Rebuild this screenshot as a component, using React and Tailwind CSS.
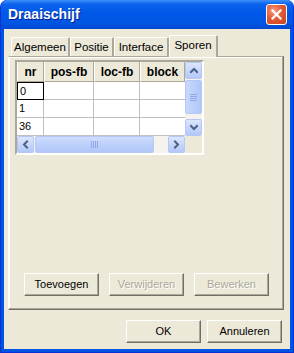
import React from "react";

const Chevron = ({ dir }) => {
  const paths = {
    up: "M2 6 L5 3 L8 6",
    down: "M2 3 L5 6 L8 3",
    left: "M6 1.5 L3 4.5 L6 7.5",
    right: "M3 1.5 L6 4.5 L3 7.5",
  };
  return (
    <svg width="9" height="9" viewBox="0 0 9 9" className="block">
      <path d={paths[dir]} fill="none" stroke="#4D6185" strokeWidth="2" strokeLinecap="square" />
    </svg>
  );
};

function ScrollButton({ dir }) {
  return (
    <div className="w-[17px] h-[17px] flex items-center justify-center rounded-[2px] border border-[#B5C8F5] bg-[linear-gradient(180deg,#DCE6FD_0%,#C3D4FB_60%,#B3C8F7_100%)]">
      <Chevron dir={dir} />
    </div>
  );
}

function XpButton({ children, disabled, className = "" }) {
  return (
    <button
      className={
        "h-[23px] w-[75px] bg-[#ECE9D8] border border-t-white border-l-white border-r-[#716F64] border-b-[#716F64] shadow-[inset_-1px_-1px_0_#ACA899] text-[11px] " +
        (disabled ? "text-[#ACA899] [text-shadow:1px_1px_0_#fff] " : "text-black ") +
        className
      }
    >
      {children}
    </button>
  );
}

function Tab({ label, active, className = "" }) {
  return (
    <div
      className={
        "relative flex items-center justify-center bg-[#ECE9D8] border-l border-t border-l-white border-t-white border-r-2 border-r-[#ACA899] rounded-t-[2px] text-[11.5px] " +
        (active ? "h-[22px] z-10 -mb-[1px] pb-[2px] " : "h-[19px] pt-[1px] ") +
        className
      }
    >
      {label}
    </div>
  );
}

const rows = ["0", "1", "36"];

export default function App() {
  return (
    <div className="w-[294px] h-[353px] flex flex-col overflow-hidden rounded-t-[7px] bg-[#0054E3] border-x border-b border-[#0831D9] font-['Liberation_Sans',Arial,sans-serif] text-[11px] text-black">
      {/* title bar */}
      <div className="h-[29px] shrink-0 flex items-center justify-between pl-[7px] pr-[6px] bg-[linear-gradient(180deg,#3E8FF9_0%,#0A62EC_15%,#0058E8_45%,#0055E3_80%,#0048D0_100%)]">
        <span className="text-white font-bold text-[14px] [text-shadow:1px_1px_0_#0A1E8C]">Draaischijf</span>
        <div className="w-[21px] h-[21px] rounded-[3px] border border-white flex items-center justify-center bg-[radial-gradient(circle_at_35%_30%,#F39E83_0%,#E35A35_45%,#C8441E_100%)]">
          <svg width="11" height="11" viewBox="0 0 11 11">
            <path d="M1.5 1.5 L9.5 9.5 M9.5 1.5 L1.5 9.5" stroke="white" strokeWidth="2.2" strokeLinecap="square" />
          </svg>
        </div>
      </div>

      {/* body */}
      <div className="flex-1 mx-[3px] mb-[3px] bg-[#ECE9D8] flex flex-col pt-[5px] pl-[4px] pr-[6px]">
        {/* tabs */}
        <div className="flex items-end h-[22px] pl-[3px]">
          <Tab label="Algemeen" className="w-[59px]" />
          <Tab label="Positie" className="w-[44px]" />
          <Tab label="Interface" className="w-[55px]" />
          <Tab label="Sporen" active className="w-[49px]" />
        </div>

        {/* tab panel */}
        <div className="h-[254px] flex flex-col border border-t-[#ACA899] border-l-white border-r-[#716F64] border-b-[#716F64] shadow-[inset_-1px_-1px_0_#ACA899,inset_1px_1px_0_#fff] pt-[3px] pl-[6px]">
          {/* grid */}
          <div className="w-[189px] h-[95px] flex flex-col border-2 border-t-[#ACA899] border-l-[#ACA899] border-r-white border-b-white bg-[#ECE9D8]">
            <div className="flex h-[74px]">
              <div className="flex flex-col w-[168px] bg-white">
                <div className="flex h-[20px] font-bold text-[12px] bg-[#ECE9D8]">
                  {[
                    ["nr", "w-[27px]"],
                    ["pos-fb", "w-[50px]"],
                    ["loc-fb", "w-[46px]"],
                    ["block", "w-[45px]"],
                  ].map(([h, w]) => (
                    <div
                      key={h}
                      className={w + " flex items-center justify-center border-r border-b border-r-[#ACA899] border-b-[#ACA899] border-l border-l-white"}
                    >
                      {h}
                    </div>
                  ))}
                </div>
                {rows.map((r, i) => (
                  <div key={r} className="flex h-[18px]">
                    <div
                      className={
                        "w-[27px] flex items-center pl-[2px] " +
                        (i === 0 ? "border border-black" : "border-r border-b border-[#C0C0C0]")
                      }
                    >
                      {r}
                    </div>
                    <div className="w-[50px] border-r border-b border-[#C0C0C0]" />
                    <div className="w-[46px] border-r border-b border-[#C0C0C0]" />
                    <div className="w-[45px] border-b border-[#C0C0C0]" />
                  </div>
                ))}
              </div>
              {/* vertical scrollbar */}
              <div className="w-[17px] flex flex-col bg-[#F4F3EE]">
                <ScrollButton dir="up" />
                <div className="h-[34px] mt-[1px] rounded-[2px] border border-[#B5C8F5] bg-[linear-gradient(90deg,#C9D8FC_0%,#BDD0FB_50%,#B1C6F7_100%)] flex flex-col items-center justify-center gap-[1px]">
                  <div className="w-[7px] h-[1px] bg-[#8EA8E8]" />
                  <div className="w-[7px] h-[1px] bg-[#8EA8E8]" />
                  <div className="w-[7px] h-[1px] bg-[#8EA8E8]" />
                  <div className="w-[7px] h-[1px] bg-[#8EA8E8]" />
                </div>
                <div className="flex-1" />
                <ScrollButton dir="down" />
              </div>
            </div>
            {/* horizontal scrollbar */}
            <div className="flex h-[17px]">
              <div className="w-[168px] flex bg-[#F4F3EE]">
                <ScrollButton dir="left" />
                <div className="w-[119px] ml-[1px] rounded-[2px] border border-[#B5C8F5] bg-[linear-gradient(180deg,#CFDCFD_0%,#BDD0FB_50%,#B1C6F7_100%)] flex items-center justify-center gap-[1px]">
                  <div className="w-[1px] h-[7px] bg-[#8EA8E8]" />
                  <div className="w-[1px] h-[7px] bg-[#8EA8E8]" />
                  <div className="w-[1px] h-[7px] bg-[#8EA8E8]" />
                  <div className="w-[1px] h-[7px] bg-[#8EA8E8]" />
                </div>
                <div className="flex-1" />
                <ScrollButton dir="right" />
              </div>
              <div className="w-[17px] bg-[#ECE9D8]" />
            </div>
          </div>

          <div className="flex-1" />

          {/* panel buttons */}
          <div className="flex gap-[10px] pl-[9px] mb-[13px]">
            <XpButton>Toevoegen</XpButton>
            <XpButton disabled>Verwijderen</XpButton>
            <XpButton disabled>Bewerken</XpButton>
          </div>
        </div>

        {/* dialog buttons */}
        <div className="flex justify-end gap-[6px] mt-[10px] pr-[2px]">
          <XpButton>OK</XpButton>
          <XpButton>Annuleren</XpButton>
        </div>
      </div>
    </div>
  );
}
